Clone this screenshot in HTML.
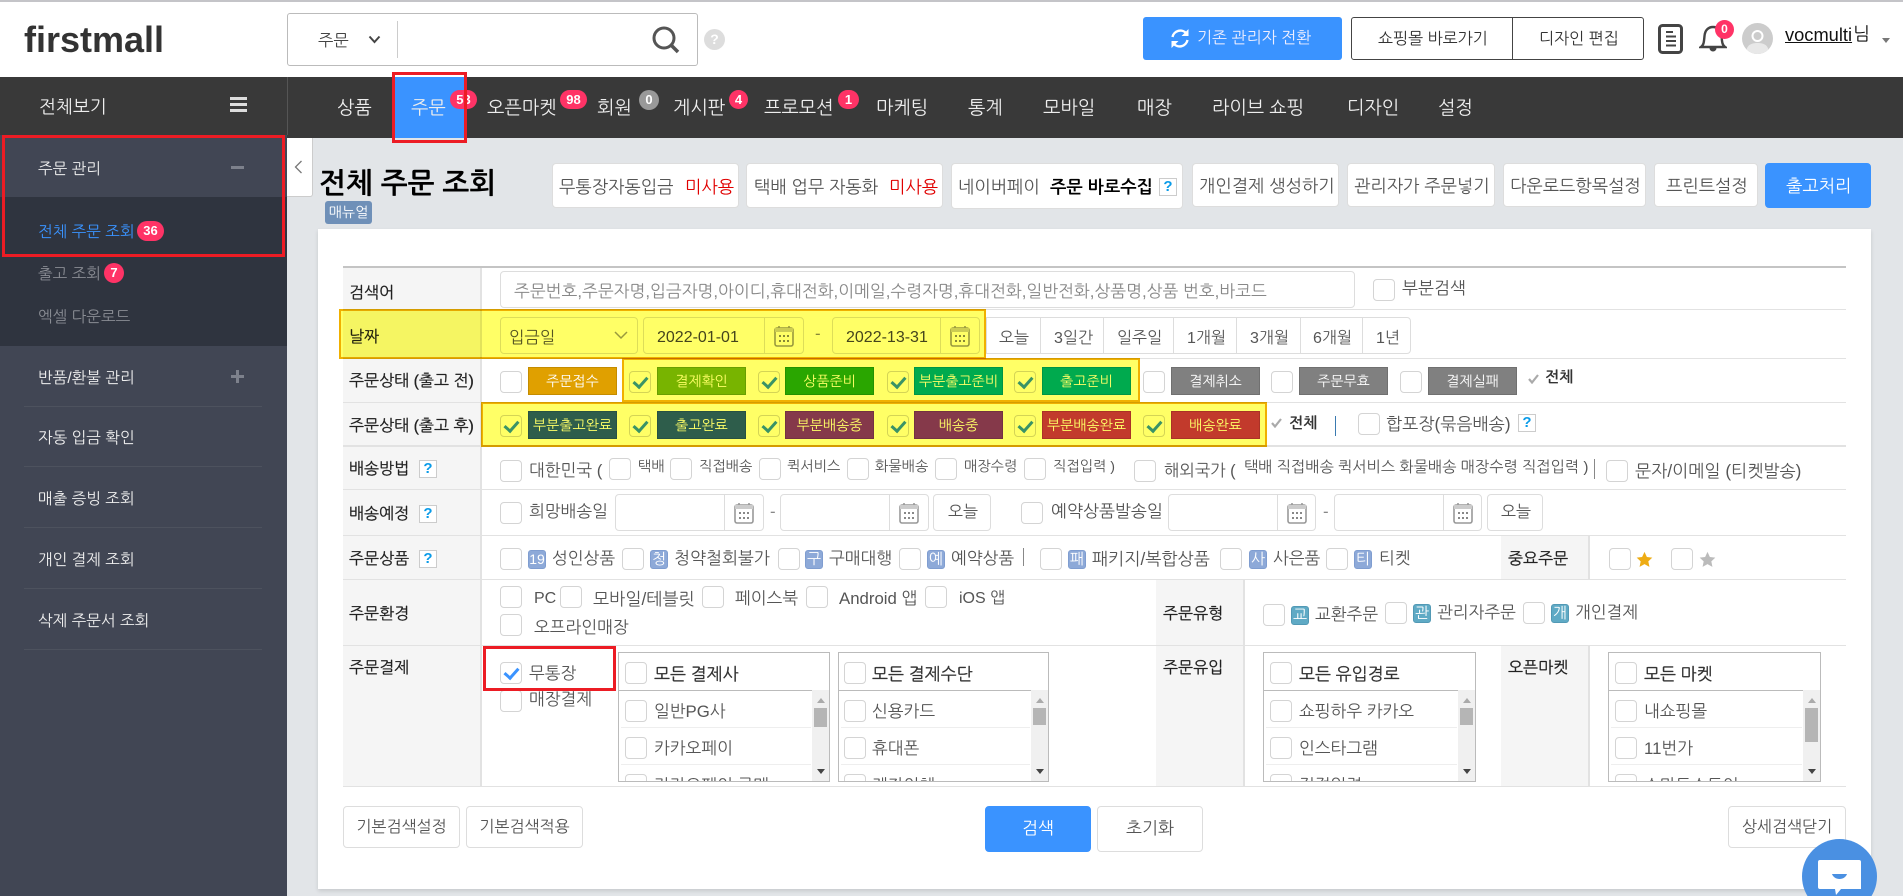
<!DOCTYPE html>
<html lang="ko"><head><meta charset="utf-8"><title>전체 주문 조회</title>
<style>
html,body{margin:0;padding:0;width:1903px;height:896px;overflow:hidden;background:#e2e5e8}
body{position:relative;font-family:"Liberation Sans","NanumGothic","Noto Sans CJK KR",sans-serif;color:#555}
.a{position:absolute;box-sizing:border-box}
.t{position:absolute;white-space:nowrap;line-height:20px;font-size:16.8px;color:#555}
.n{position:absolute;white-space:nowrap;line-height:20px;font-size:18.5px;color:#eee;top:98px}
.s{position:absolute;white-space:nowrap;line-height:20px;font-size:15.6px;color:#eee;left:38px}
.l{position:absolute;white-space:nowrap;line-height:20px;font-size:16px;color:#222;left:349px;font-weight:400;-webkit-text-stroke:.25px #222}
.d{position:absolute;left:24px;width:238px;height:1px;background:#4d525e}
.bd{position:absolute;background:#f36;color:#fff;font-weight:700;font-size:13px;line-height:19px;height:19px;text-align:center;border-radius:10px}
.tb{position:absolute;box-sizing:border-box;top:163px;height:45px;background:#fff;border:1px solid #ddd;border-radius:4px}
.b{font-size:17.4px;top:177px}
.cb{position:absolute;box-sizing:border-box;width:22px;height:22px;background:#fff;border:1px solid #d4d4d4;border-radius:4px;display:block}
.cb.on::after{content:"";position:absolute;left:6px;top:2px;width:6px;height:11px;border:solid #3a93ff;border-width:0 3px 3px 0;transform:rotate(42deg)}
.tag{position:absolute;box-sizing:border-box;width:89px;height:28px;line-height:26px;text-align:center;color:#fff;font-size:14px;border:1px solid rgba(0,0,0,.12)}
.q{position:absolute;box-sizing:border-box;width:18px;height:18px;background:#fff;border:1px solid #ccc;color:#0a9be8;font-weight:700;font-size:15px;line-height:16px;text-align:center}
.ic{position:absolute;box-sizing:border-box;width:18px;height:19px;background:#8da9d8;border:1px solid #7f9dd0;border-radius:3px;color:#fff;font-size:15px;line-height:17px;text-align:center;overflow:hidden}
.ic.g{background:#5faac5;border-color:#5299b5}
.inp{position:absolute;box-sizing:border-box;background:#fff;border:1px solid #ddd;border-radius:4px;height:37px}
.vl{position:absolute;width:1px;background:#ddd}
.hl{position:absolute;left:343px;width:1503px;height:1px;background:#e2e2e2}
.box{position:absolute;box-sizing:border-box;top:652px;height:130px;background:#fff;border:1px solid #bbb;overflow:hidden}
.sb{position:absolute;right:0;top:37px;width:17px;height:92px;background:#f0f0f0}
.up,.dn{position:absolute;left:5px;width:0;height:0;border-left:4px solid transparent;border-right:4px solid transparent}
.up{top:8px;border-bottom:5px solid #aaa}.dn{top:79px;border-top:5px solid #444}
.th{position:absolute;left:2px;width:13px;background:#b5b5b5;top:18px}
.ln{position:absolute;left:2px;right:18px;height:1px;background:#eee}
.hd{color:#333;font-size:17px;-webkit-text-stroke:.3px #333}
.y{position:absolute;box-sizing:border-box;background:#ffff66;border:2px solid #f0b000;mix-blend-mode:multiply}
.r{position:absolute;box-sizing:border-box;border:3px solid #ec1c24}
.btn{position:absolute;box-sizing:border-box;background:#fff;border:1px solid #ddd;border-radius:4px;text-align:center;font-size:16px;color:#555}
</style></head><body>
<svg width="0" height="0" style="position:absolute"><defs>
<symbol id="cal" viewBox="0 0 20 22"><path d="M5 1v4M15 1v4" stroke="#999" stroke-width="1.6"/><rect x="1" y="3" width="18" height="18" rx="2" fill="none" stroke="#999" stroke-width="1.6"/><rect x="1" y="3" width="18" height="4" fill="#ccc"/><g fill="#888"><rect x="5" y="10" width="2" height="2"/><rect x="9" y="10" width="2" height="2"/><rect x="13" y="10" width="2" height="2"/><rect x="5" y="15" width="2" height="2"/><rect x="9" y="15" width="2" height="2"/><rect x="13" y="15" width="2" height="2"/></g></symbol>
<symbol id="star" viewBox="0 0 20 20"><path d="M10 1l2.8 6 6.4.8-4.7 4.4 1.3 6.5L10 15.4l-5.8 3.3 1.3-6.5L.8 7.8 7.2 7z"/></symbol>
</defs></svg>

<!-- header -->
<div class="a" style="left:0;top:0;width:1903px;height:77px;background:#fff"></div>
<div class="a" style="left:0;top:0;width:1903px;height:2px;background:#c4c4c8"></div>
<div class="t" style="left:24px;top:20px;line-height:40px;font-size:36px;font-weight:700;color:#333">firstmall</div>
<div class="a" style="left:287px;top:13px;width:411px;height:53px;border:1px solid #bbb;border-radius:3px"></div>
<div class="t" style="left:318px;top:31px;color:#444;font-size:16.4px">주문</div>
<svg class="a" style="left:368px;top:35px" width="13" height="9"><path d="M1.5 1.5L6.5 7l5-5.5" fill="none" stroke="#444" stroke-width="2"/></svg>
<div class="a" style="left:397px;top:21px;width:1px;height:37px;background:#ccc"></div>
<svg class="a" style="left:652px;top:26px" width="28" height="28"><circle cx="12" cy="12" r="10" fill="none" stroke="#555" stroke-width="3"/><path d="M19 19l7 7" stroke="#555" stroke-width="3.5"/></svg>
<div class="a" style="left:704px;top:29px;width:21px;height:21px;border-radius:50%;background:#ddd;color:#fff;font-weight:700;font-size:14px;line-height:21px;text-align:center">?</div>
<div class="a" style="left:1143px;top:17px;width:199px;height:43px;background:#3a93ff;border-radius:3px"></div>
<svg class="a" style="left:1169px;top:28px" width="22" height="21" viewBox="0 0 22 21"><path d="M3.5 9A8 8 0 0 1 17.5 5.5M18.5 12A8 8 0 0 1 4.5 15.5" fill="none" stroke="#fff" stroke-width="2.4"/><path d="M19.5 1v7h-7zM2.5 20v-7h7z" fill="#fff"/></svg>
<div class="t" style="left:1197px;top:29px;color:#eef;font-size:16px">기존 관리자 전환</div>
<div class="a" style="left:1351px;top:17px;width:293px;height:43px;border:1px solid #444;border-radius:3px"></div>
<div class="a" style="left:1512px;top:17px;width:1px;height:43px;background:#444"></div>
<div class="t" style="left:1378px;top:30px;color:#333;font-size:16px">쇼핑몰 바로가기</div>
<div class="t" style="left:1539px;top:30px;color:#333;font-size:16px">디자인 편집</div>
<svg class="a" style="left:1658px;top:24px" width="25" height="30"><rect x="1.5" y="1.5" width="22" height="27" rx="3" fill="none" stroke="#444" stroke-width="3"/><path d="M8 8h7M8 12.5h10M8 17h10M8 21.5h10" stroke="#444" stroke-width="2"/></svg>
<svg class="a" style="left:1699px;top:24px" width="28" height="30"><path d="M2 23c3-2 3-6 3.500-11C6 6 9.500 3 14 3s8 3 8.500 9c.5 5 .5 9 3.500 11z" fill="none" stroke="#444" stroke-width="2.400"/><path d="M10.500 24a3.500 3.500 0 0 0 7 0z" fill="#444"/></svg>
<div class="bd" style="left:1715px;top:20px;width:19px;height:19px;border-radius:50%;font-size:12px">0</div>
<svg class="a" style="left:1742px;top:23px" width="31" height="31"><defs><clipPath id="av"><circle cx="15.500" cy="15.500" r="15.500"/></clipPath></defs><circle cx="15.500" cy="15.500" r="15.500" fill="#ccc"/><circle cx="15.500" cy="13" r="5" fill="none" stroke="#fff" stroke-width="2"/><path d="M4 31c0-9 5-11 11.500-11S27 22 27 31z" fill="#e8e8e8" clip-path="url(#av)"/></svg>
<div class="t" style="left:1785px;top:25px;color:#111;font-size:18.3px;text-decoration:underline">vocmulti</div>
<div class="t" style="left:1853px;top:24px;color:#111;font-size:18px">님</div>
<div class="a" style="left:1882px;top:38px;width:0;height:0;border-left:4px solid transparent;border-right:4px solid transparent;border-top:5px solid #777"></div>

<!-- nav -->
<div class="a" style="left:0;top:77px;width:1903px;height:61px;background:#393939"></div>
<div class="a" style="left:395px;top:77px;width:69px;height:61px;background:#3a93ff"></div>
<div class="n" style="left:337px">상품</div><div class="n" style="left:411px">주문</div><div class="n" style="left:487px">오픈마켓</div><div class="n" style="left:597px">회원</div><div class="n" style="left:673px">게시판</div><div class="n" style="left:764px">프로모션</div><div class="n" style="left:876px">마케팅</div><div class="n" style="left:968px">통계</div><div class="n" style="left:1043px">모바일</div><div class="n" style="left:1137px">매장</div><div class="n" style="left:1212px">라이브 쇼핑</div><div class="n" style="left:1347px">디자인</div><div class="n" style="left:1438px">설정</div>
<div class="bd" style="left:450px;top:90px;width:27px">53</div>
<div class="bd" style="left:560px;top:90px;width:27px">98</div>
<div class="bd" style="left:639px;top:90px;width:20px;height:20px;line-height:20px;background:#999;border-radius:50%">0</div>
<div class="bd" style="left:729px;top:90px;width:19px">4</div>
<div class="bd" style="left:838px;top:90px;width:21px">1</div>

<!-- sidebar -->
<div class="a" style="left:0;top:135px;width:287px;height:761px;background:#414654"></div>
<div class="a" style="left:0;top:197px;width:287px;height:149px;background:#2f343f"></div>
<div class="a" style="left:287px;top:77px;width:1px;height:58px;background:#555"></div>
<div class="t" style="left:39px;top:97px;color:#eee;font-size:18px">전체보기</div>
<div class="a" style="left:230px;top:97px;width:17px;height:3px;background:#ddd"></div>
<div class="a" style="left:230px;top:103px;width:17px;height:3px;background:#ddd"></div>
<div class="a" style="left:230px;top:109px;width:17px;height:3px;background:#ddd"></div>
<div class="s" style="top:160px">주문 관리</div>
<div class="a" style="left:231px;top:166px;width:13px;height:3px;background:#7d818c"></div>
<div class="s" style="top:223px;color:#3a93ff">전체 주문 조회</div>
<div class="bd" style="left:137px;top:221px;width:27px;height:20px;line-height:20px">36</div>
<div class="s" style="top:265px;color:#8a8d94">출고 조회</div>
<div class="bd" style="left:104px;top:263px;width:20px;height:20px;line-height:20px;border-radius:50%">7</div>
<div class="s" style="top:308px;color:#8a8d94">엑셀 다운로드</div>
<div class="s" style="top:369px">반품/환불 관리</div>
<div class="a" style="left:231px;top:375px;width:13px;height:3px;background:#7d818c"></div><div class="a" style="left:236px;top:370px;width:3px;height:13px;background:#7d818c"></div>
<div class="d" style="top:406px"></div>
<div class="s" style="top:429px">자동 입금 확인</div><div class="d" style="top:466px"></div>
<div class="s" style="top:490px">매출 증빙 조회</div><div class="d" style="top:527px"></div>
<div class="s" style="top:551px">개인 결제 조회</div><div class="d" style="top:588px"></div>
<div class="s" style="top:612px">삭제 주문서 조회</div><div class="d" style="top:649px"></div>

<!-- collapse + title -->
<div class="a" style="left:287px;top:138px;width:26px;height:59px;background:#fff;border:1px solid #ccc;border-left:0;border-top:0;border-radius:0 0 3px 0"></div>
<svg class="a" style="left:294px;top:160px" width="9" height="14"><path d="M7.500 1L1.500 7l6 6" fill="none" stroke="#777" stroke-width="1.300"/></svg>
<div class="t" style="left:319px;top:169px;line-height:30px;font-size:28.6px;font-weight:700;color:#000">전체 주문 조회</div>
<div class="a" style="left:325px;top:201px;width:47px;height:23px;background:#6f90b8;border-radius:3px;color:#fff;font-size:14px;line-height:23px;text-align:center">매뉴얼</div>

<!-- top buttons -->
<div class="tb" style="left:552px;width:187px"></div>
<div class="t b" style="left:559px">무통장자동입금</div><div class="t b" style="left:685px;color:#e00000">미사용</div>
<div class="tb" style="left:746px;width:197px"></div>
<div class="t b" style="left:754px">택배 업무 자동화</div><div class="t b" style="left:889px;color:#e00000">미사용</div>
<div class="tb" style="left:951px;width:232px;height:46px"></div>
<div class="t b" style="left:958px">네이버페이</div><div class="t b" style="left:1050px;color:#000;font-weight:700">주문 바로수집</div>
<div class="q" style="left:1159px;top:178px">?</div>
<div class="tb" style="left:1192px;width:147px;height:44px"></div><div class="t b" style="left:1199px;top:176px">개인결제 생성하기</div>
<div class="tb" style="left:1347px;width:148px;height:44px"></div><div class="t b" style="left:1354px;top:176px">관리자가 주문넣기</div>
<div class="tb" style="left:1503px;width:143px;height:44px"></div><div class="t b" style="left:1510px;top:176px">다운로드항목설정</div>
<div class="tb" style="left:1654px;width:104px;height:44px"></div><div class="t b" style="left:1666px;top:176px">프린트설정</div>
<div class="tb" style="left:1765px;width:106px;background:#3a93ff;border-color:#3a93ff"></div><div class="t b" style="left:1786px;top:176px;color:#fff">출고처리</div>

<!-- panel -->
<div class="a" style="left:318px;top:229px;width:1553px;height:660px;background:#fff;box-shadow:0 2px 4px rgba(0,0,0,.12)"></div>
<div class="a" style="left:343px;top:268px;width:137px;height:519px;background:#f5f5f5"></div>
<div class="a" style="left:480px;top:268px;width:2px;height:519px;background:#e2e2e2"></div>
<div class="a" style="left:1156px;top:579px;width:87px;height:208px;background:#f5f5f5"></div>
<div class="a" style="left:1243px;top:579px;width:2px;height:208px;background:#e2e2e2"></div>
<div class="a" style="left:1501px;top:535px;width:87px;height:44px;background:#f5f5f5"></div>
<div class="a" style="left:1501px;top:645px;width:87px;height:142px;background:#f5f5f5"></div>
<div class="a" style="left:1588px;top:535px;width:2px;height:44px;background:#e2e2e2"></div>
<div class="a" style="left:1588px;top:645px;width:2px;height:142px;background:#e2e2e2"></div>
<div class="a" style="left:343px;top:266px;width:1503px;height:2px;background:#c4c4c4"></div>
<div class="hl" style="top:309px"></div><div class="hl" style="top:358px"></div><div class="hl" style="top:402px"></div>
<div class="hl" style="top:445px;height:2px"></div><div class="hl" style="top:489px"></div><div class="hl" style="top:535px"></div><div class="hl" style="top:579px"></div><div class="hl" style="top:645px"></div><div class="hl" style="top:786px"></div>

<!-- labels -->
<div class="l" style="top:284px">검색어</div>
<div class="l" style="top:328px">날짜</div>
<div class="l" style="top:372px">주문상태 (출고 전)</div>
<div class="l" style="top:417px">주문상태 (출고 후)</div>
<div class="l" style="top:460px">배송방법</div><div class="q" style="left:419px;top:460px">?</div>
<div class="l" style="top:505px">배송예정</div><div class="q" style="left:419px;top:505px">?</div>
<div class="l" style="top:550px">주문상품</div><div class="q" style="left:419px;top:550px">?</div>
<div class="l" style="top:605px">주문환경</div>
<div class="l" style="top:659px">주문결제</div>
<div class="l" style="left:1508px;top:550px">중요주문</div>
<div class="l" style="left:1163px;top:605px">주문유형</div>
<div class="l" style="left:1163px;top:659px">주문유입</div>
<div class="l" style="left:1508px;top:659px">오픈마켓</div>

<!-- row 1 -->
<div class="inp" style="left:500px;top:271px;width:855px"></div>
<div class="t" style="left:514px;top:282px;color:#888;font-size:16.85px">주문번호,주문자명,입금자명,아이디,휴대전화,이메일,수령자명,휴대전화,일반전화,상품명,상품 번호,바코드</div>
<i class="cb" style="left:1373px;top:279px"></i><div class="t" style="left:1402px;top:279px;font-size:17px">부분검색</div>

<!-- row 2 -->
<div class="inp" style="left:500px;top:317px;width:138px"></div><div class="t" style="left:509px;top:328px;font-size:16.4px">입금일</div>
<svg class="a" style="left:614px;top:331px" width="14" height="9"><path d="M1 1l6 6 6-6" fill="none" stroke="#999" stroke-width="1.500"/></svg>
<div class="inp" style="left:643px;top:317px;width:161px"></div><div class="vl" style="left:764px;top:317px;height:37px"></div><div class="t" style="left:657px;top:328px;color:#444;font-size:16px">2022-01-01</div>
<svg class="a" style="left:774px;top:325px" width="20" height="22"><use href="#cal"/></svg>
<div class="t" style="left:815px;top:324px;color:#888">-</div>
<div class="inp" style="left:832px;top:317px;width:148px"></div><div class="vl" style="left:940px;top:317px;height:37px"></div><div class="t" style="left:846px;top:328px;color:#444;font-size:16px">2022-13-31</div>
<svg class="a" style="left:950px;top:325px" width="20" height="22"><use href="#cal"/></svg>
<div class="inp" style="left:986px;top:317px;width:425px;border-radius:0 4px 4px 0"></div>
<div class="vl" style="left:1040px;top:317px;height:37px"></div><div class="vl" style="left:1103px;top:317px;height:37px"></div><div class="vl" style="left:1173px;top:317px;height:37px"></div><div class="vl" style="left:1236px;top:317px;height:37px"></div><div class="vl" style="left:1300px;top:317px;height:37px"></div><div class="vl" style="left:1362px;top:317px;height:37px"></div>
<div class="t" style="left:999px;top:329px;font-size:16px">오늘</div><div class="t" style="left:1054px;top:329px;font-size:16px">3일간</div><div class="t" style="left:1117px;top:329px;font-size:16px">일주일</div><div class="t" style="left:1187px;top:329px;font-size:16px">1개월</div><div class="t" style="left:1250px;top:329px;font-size:16px">3개월</div><div class="t" style="left:1313px;top:329px;font-size:16px">6개월</div><div class="t" style="left:1376px;top:329px;font-size:16px">1년</div>

<!-- row 3 -->
<i class="cb" style="left:500px;top:371px"></i><div class="tag" style="left:528px;top:367px;background:#e0a000">주문접수</div>
<i class="cb on" style="left:629px;top:371px"></i><div class="tag" style="left:657px;top:367px;background:#78b400">결제확인</div>
<i class="cb on" style="left:758px;top:371px"></i><div class="tag" style="left:785px;top:367px;background:#2aa600">상품준비</div>
<i class="cb on" style="left:887px;top:371px"></i><div class="tag" style="left:914px;top:367px;background:#00aac3">부분출고준비</div>
<i class="cb on" style="left:1014px;top:371px"></i><div class="tag" style="left:1042px;top:367px;background:#00aac3">출고준비</div>
<i class="cb" style="left:1143px;top:371px"></i><div class="tag" style="left:1171px;top:367px;background:#808080">결제취소</div>
<i class="cb" style="left:1271px;top:371px"></i><div class="tag" style="left:1299px;top:367px;background:#808080">주문무효</div>
<i class="cb" style="left:1400px;top:371px"></i><div class="tag" style="left:1428px;top:367px;background:#808080">결제실패</div>
<svg class="a" style="left:1528px;top:374px" width="11" height="10"><path d="M1 5l3 3.500L10 1" fill="none" stroke="#aaa" stroke-width="2.200"/></svg>
<div class="t" style="left:1545px;top:368px;color:#333;font-weight:700;font-size:15px">전체</div>

<!-- row 4 -->
<i class="cb on" style="left:500px;top:415px"></i><div class="tag" style="left:528px;top:411px;background:#2e5dbc">부분출고완료</div>
<i class="cb on" style="left:629px;top:415px"></i><div class="tag" style="left:657px;top:411px;background:#2e5dbc">출고완료</div>
<i class="cb on" style="left:758px;top:415px"></i><div class="tag" style="left:785px;top:411px;background:#8539b9">부분배송중</div>
<i class="cb on" style="left:887px;top:415px"></i><div class="tag" style="left:914px;top:411px;background:#8539b9">배송중</div>
<i class="cb on" style="left:1014px;top:415px"></i><div class="tag" style="left:1042px;top:411px;background:#c23a6e">부분배송완료</div>
<i class="cb on" style="left:1143px;top:415px"></i><div class="tag" style="left:1171px;top:411px;background:#c23a6e">배송완료</div>
<svg class="a" style="left:1271px;top:418px" width="11" height="10"><path d="M1 5l3 3.500L10 1" fill="none" stroke="#aaa" stroke-width="2.200"/></svg>
<div class="t" style="left:1289px;top:414px;color:#333;font-weight:700;font-size:15px">전체</div>
<div class="a" style="left:1335px;top:416px;width:1px;height:20px;background:#3a7ab0"></div>
<i class="cb" style="left:1358px;top:413px"></i><div class="t" style="left:1386px;top:414px;font-size:17.2px">합포장(묶음배송)</div>
<div class="q" style="left:1518px;top:414px">?</div>

<!-- row 5 -->
<i class="cb" style="left:500px;top:460px"></i><div class="t" style="left:529px;top:461px">대한민국 (</div>
<i class="cb" style="left:609px;top:458px"></i><div class="t" style="left:638px;top:457px;font-size:14.2px">택배</div>
<i class="cb" style="left:670px;top:458px"></i><div class="t" style="left:699px;top:457px;font-size:14.2px">직접배송</div>
<i class="cb" style="left:759px;top:458px"></i><div class="t" style="left:787px;top:457px;font-size:14.2px">퀵서비스</div>
<i class="cb" style="left:847px;top:458px"></i><div class="t" style="left:875px;top:457px;font-size:14.2px">화물배송</div>
<i class="cb" style="left:935px;top:458px"></i><div class="t" style="left:964px;top:457px;font-size:14.2px">매장수령</div>
<i class="cb" style="left:1024px;top:458px"></i><div class="t" style="left:1053px;top:457px;font-size:14.2px">직접입력 )</div>
<i class="cb" style="left:1134px;top:460px"></i><div class="t" style="left:1164px;top:461px;font-size:16.4px">해외국가 (</div>
<div class="t" style="left:1244px;top:458px;font-size:15.2px">택배 직접배송 퀵서비스 화물배송 매장수령 직접입력 )</div>
<div class="a" style="left:1594px;top:459px;width:1px;height:20px;background:#888"></div>
<i class="cb" style="left:1606px;top:460px"></i><div class="t" style="left:1635px;top:461px;font-size:17.2px">문자/이메일 (티켓발송)</div>

<!-- row 6 -->
<i class="cb" style="left:500px;top:502px"></i><div class="t" style="left:529px;top:502px">희망배송일</div>
<div class="inp" style="left:615px;top:494px;width:149px"></div><div class="vl" style="left:724px;top:494px;height:37px"></div><svg class="a" style="left:734px;top:502px" width="20" height="22"><use href="#cal"/></svg>
<div class="t" style="left:770px;top:502px;color:#888">-</div>
<div class="inp" style="left:780px;top:494px;width:149px"></div><div class="vl" style="left:889px;top:494px;height:37px"></div><svg class="a" style="left:899px;top:502px" width="20" height="22"><use href="#cal"/></svg>
<div class="inp" style="left:933px;top:494px;width:58px"></div><div class="t" style="left:948px;top:503px;font-size:16px">오늘</div>
<i class="cb" style="left:1021px;top:502px"></i><div class="t" style="left:1051px;top:502px;font-size:17px">예약상품발송일</div>
<div class="inp" style="left:1168px;top:494px;width:148px"></div><div class="vl" style="left:1277px;top:494px;height:37px"></div><svg class="a" style="left:1287px;top:502px" width="20" height="22"><use href="#cal"/></svg>
<div class="t" style="left:1323px;top:502px;color:#888">-</div>
<div class="inp" style="left:1334px;top:494px;width:148px"></div><div class="vl" style="left:1443px;top:494px;height:37px"></div><svg class="a" style="left:1453px;top:502px" width="20" height="22"><use href="#cal"/></svg>
<div class="inp" style="left:1487px;top:494px;width:56px"></div><div class="t" style="left:1501px;top:503px;font-size:16px">오늘</div>

<!-- row 7 -->
<i class="cb" style="left:500px;top:548px"></i><div class="ic" style="left:528px;top:550px;font-size:14px">19</div><div class="t" style="left:552px;top:549px">성인상품</div>
<i class="cb" style="left:622px;top:548px"></i><div class="ic" style="left:650px;top:550px">청</div><div class="t" style="left:674px;top:549px;font-size:17px">청약철회불가</div>
<i class="cb" style="left:778px;top:548px"></i><div class="ic" style="left:805px;top:550px">구</div><div class="t" style="left:829px;top:549px">구매대행</div>
<i class="cb" style="left:899px;top:548px"></i><div class="ic" style="left:927px;top:550px">예</div><div class="t" style="left:951px;top:549px">예약상품</div>
<div class="a" style="left:1023px;top:548px;width:1px;height:18px;background:#888"></div>
<i class="cb" style="left:1040px;top:548px"></i><div class="ic" style="left:1068px;top:550px">패</div><div class="t" style="left:1092px;top:549px;font-size:17.2px">패키지/복합상품</div>
<i class="cb" style="left:1220px;top:548px"></i><div class="ic" style="left:1249px;top:550px">사</div><div class="t" style="left:1273px;top:549px">사은품</div>
<i class="cb" style="left:1326px;top:548px"></i><div class="ic" style="left:1354px;top:550px">티</div><div class="t" style="left:1379px;top:549px">티켓</div>
<i class="cb" style="left:1609px;top:548px"></i><svg class="a" style="left:1636px;top:551px;fill:#eeac14" width="17" height="17"><use href="#star"/></svg>
<i class="cb" style="left:1671px;top:548px"></i><svg class="a" style="left:1699px;top:551px;fill:#bbb" width="17" height="17"><use href="#star"/></svg>

<!-- row 8 -->
<i class="cb" style="left:500px;top:586px"></i><div class="t" style="left:534px;top:589px;font-size:16px">PC</div>
<i class="cb" style="left:560px;top:586px"></i><div class="t" style="left:593px;top:589px;font-size:17.2px">모바일/테블릿</div>
<i class="cb" style="left:702px;top:586px"></i><div class="t" style="left:735px;top:589px">페이스북</div>
<i class="cb" style="left:806px;top:586px"></i><div class="t" style="left:839px;top:589px">Android 앱</div>
<i class="cb" style="left:925px;top:586px"></i><div class="t" style="left:959px;top:589px;font-size:16px">iOS 앱</div>
<i class="cb" style="left:500px;top:614px"></i><div class="t" style="left:534px;top:618px">오프라인매장</div>
<i class="cb" style="left:1263px;top:604px"></i><div class="ic g" style="left:1291px;top:606px">교</div><div class="t" style="left:1315px;top:605px">교환주문</div>
<i class="cb" style="left:1385px;top:602px"></i><div class="ic g" style="left:1413px;top:604px">관</div><div class="t" style="left:1437px;top:603px">관리자주문</div>
<i class="cb" style="left:1523px;top:602px"></i><div class="ic g" style="left:1551px;top:604px">개</div><div class="t" style="left:1575px;top:603px">개인결제</div>

<!-- row 9 -->
<i class="cb on" style="left:500px;top:662px"></i><div class="t" style="left:529px;top:664px">무통장</div>
<i class="cb" style="left:500px;top:690px"></i><div class="t" style="left:529px;top:690px">매장결제</div>

<div class="box" style="left:618px;width:212px">
<i class="cb" style="left:6px;top:9px"></i><div class="t hd" style="left:35px;top:12px">모든 결제사</div>
<div class="a" style="left:0;right:0;top:37px;height:1px;background:#bbb"></div>
<i class="cb" style="left:6px;top:47px"></i><div class="t" style="left:35px;top:49px">일반PG사</div><div class="ln" style="top:74px"></div>
<i class="cb" style="left:6px;top:84px"></i><div class="t" style="left:35px;top:86px">카카오페이</div><div class="ln" style="top:111px"></div>
<i class="cb" style="left:6px;top:121px"></i><div class="t" style="left:35px;top:123px">카카오페이 구매</div>
<div class="sb"><div class="up"></div><div class="th" style="height:19px"></div><div class="dn"></div></div></div>

<div class="box" style="left:838px;width:211px">
<i class="cb" style="left:5px;top:9px"></i><div class="t hd" style="left:33px;top:12px">모든 결제수단</div>
<div class="a" style="left:0;right:0;top:37px;height:1px;background:#bbb"></div>
<i class="cb" style="left:5px;top:47px"></i><div class="t" style="left:33px;top:49px">신용카드</div><div class="ln" style="top:74px"></div>
<i class="cb" style="left:5px;top:84px"></i><div class="t" style="left:33px;top:86px">휴대폰</div><div class="ln" style="top:111px"></div>
<i class="cb" style="left:5px;top:121px"></i><div class="t" style="left:33px;top:123px">계좌이체</div>
<div class="sb"><div class="up"></div><div class="th" style="height:17px"></div><div class="dn"></div></div></div>

<div class="box" style="left:1263px;width:213px">
<i class="cb" style="left:6px;top:9px"></i><div class="t hd" style="left:35px;top:12px">모든 유입경로</div>
<div class="a" style="left:0;right:0;top:37px;height:1px;background:#bbb"></div>
<i class="cb" style="left:6px;top:47px"></i><div class="t" style="left:35px;top:49px">쇼핑하우 카카오</div><div class="ln" style="top:74px"></div>
<i class="cb" style="left:6px;top:84px"></i><div class="t" style="left:35px;top:86px">인스타그램</div><div class="ln" style="top:111px"></div>
<i class="cb" style="left:6px;top:121px"></i><div class="t" style="left:35px;top:123px">직접입력</div>
<div class="sb"><div class="up"></div><div class="th" style="height:17px"></div><div class="dn"></div></div></div>

<div class="box" style="left:1608px;width:213px">
<i class="cb" style="left:6px;top:9px"></i><div class="t hd" style="left:35px;top:12px">모든 마켓</div>
<div class="a" style="left:0;right:0;top:37px;height:1px;background:#bbb"></div>
<i class="cb" style="left:6px;top:47px"></i><div class="t" style="left:35px;top:49px">내쇼핑몰</div><div class="ln" style="top:74px"></div>
<i class="cb" style="left:6px;top:84px"></i><div class="t" style="left:35px;top:86px">11번가</div><div class="ln" style="top:111px"></div>
<i class="cb" style="left:6px;top:121px"></i><div class="t" style="left:35px;top:123px">스마트스토어</div>
<div class="sb"><div class="up"></div><div class="th" style="height:34px"></div><div class="dn"></div></div></div>

<!-- bottom buttons -->
<div class="btn" style="left:343px;top:806px;width:117px;height:42px;line-height:42px">기본검색설정</div>
<div class="btn" style="left:466px;top:806px;width:117px;height:42px;line-height:42px">기본검색적용</div>
<div class="btn" style="left:985px;top:806px;width:106px;height:46px;line-height:44px;background:#3a93ff;border-color:#3a93ff;color:#fff;font-size:17px">검색</div>
<div class="btn" style="left:1097px;top:806px;width:106px;height:46px;line-height:44px;font-size:17px">초기화</div>
<div class="btn" style="left:1728px;top:806px;width:118px;height:42px;line-height:42px">상세검색닫기</div>

<!-- highlights -->
<div class="y" style="left:339px;top:309px;width:647px;height:50px"></div>
<div class="y" style="left:622px;top:358px;width:518px;height:44px"></div>
<div class="y" style="left:481px;top:402px;width:786px;height:45px"></div>

<!-- red boxes -->
<div class="r" style="left:392px;top:72px;width:75px;height:71px"></div>
<div class="r" style="left:2px;top:135px;width:283px;height:122px"></div>
<div class="r" style="left:483px;top:646px;width:133px;height:45px"></div>

<!-- chat -->
<div class="a" style="left:1802px;top:839px;width:75px;height:75px;border-radius:50%;background:#4a90e2"></div>
<svg class="a" style="left:1818px;top:860px" width="43" height="36"><path d="M2 0h39a2 2 0 0 1 2 2v27H23l-5 6-1-6H2a2 2 0 0 1-2-2V2a2 2 0 0 1 2-2z" fill="#fff"/><path d="M14 14h15c-1 3-4 5-7.500 5S15 17 14 14z" fill="#4a90e2"/></svg>
</body></html>
